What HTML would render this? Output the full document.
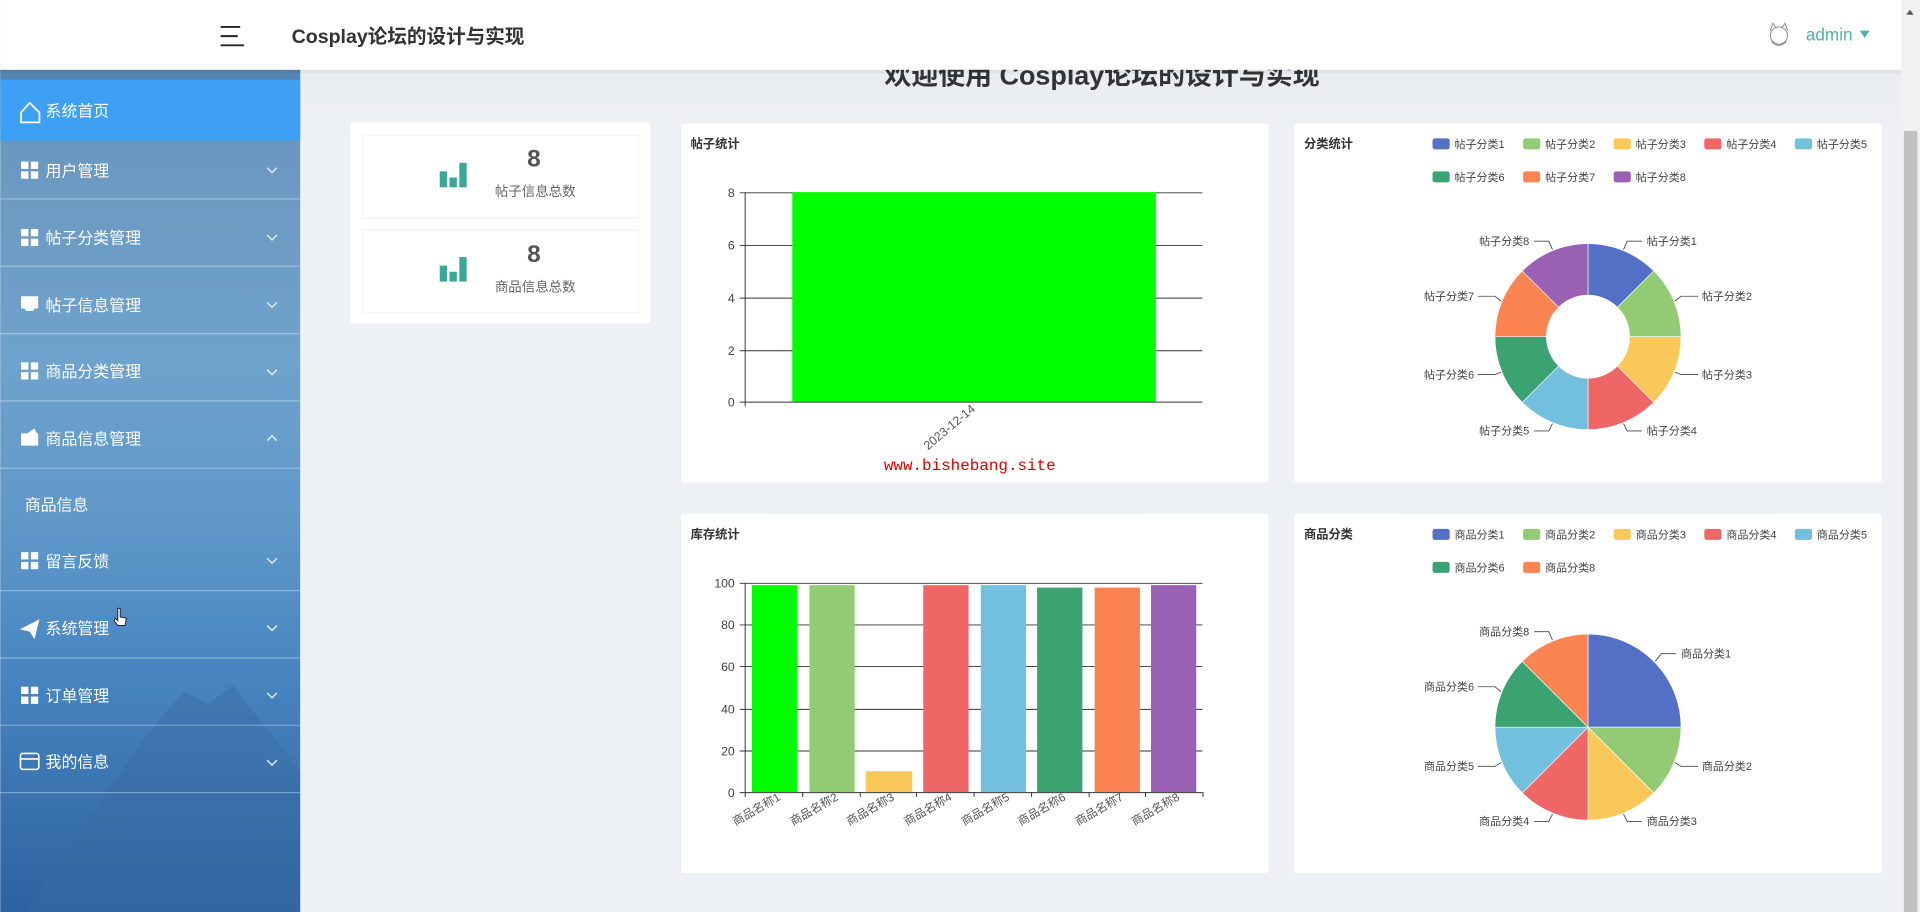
<!DOCTYPE html>
<html><head><meta charset="utf-8"><style>
html,body{margin:0;padding:0;width:1920px;height:912px;overflow:hidden;background:#edf0f4}
svg{display:block}
text{font-family:"Liberation Sans","Noto Sans CJK SC",sans-serif}
text.mono{font-family:"Liberation Mono",monospace}
</style></head><body>
<svg width="1920" height="912" viewBox="0 0 1568 745" xmlns="http://www.w3.org/2000/svg">
<defs>
<linearGradient id="sb" x1="0" y1="0" x2="0" y2="1">
<stop offset="0" stop-color="#5f8fb8"/>
<stop offset="0.1" stop-color="#6b98c0"/>
<stop offset="0.35" stop-color="#6fa2cc"/>
<stop offset="0.55" stop-color="#5e97c8"/>
<stop offset="0.7" stop-color="#4a87c2"/>
<stop offset="1" stop-color="#2d62a0"/>
</linearGradient>
<linearGradient id="bg" x1="0" y1="0" x2="0" y2="1">
<stop offset="0" stop-color="#e6e9ee"/><stop offset="0.15" stop-color="#edf0f4"/><stop offset="1" stop-color="#edf0f4"/>
</linearGradient>
</defs>
<rect x="245" y="0" width="1308" height="745" fill="url(#bg)"/>
<text x="900" y="69" text-anchor="middle" font-size="22" font-weight="bold" fill="#333">欢迎使用 Cosplay论坛的设计与实现</text>

<!-- sidebar -->
<rect x="0" y="57" width="245" height="688" fill="url(#sb)"/>
<polygon points="20,745 120,600 150,565 170,575 190,560 245,630 245,745" fill="#3a6ba5" opacity="0.45"/>
<rect x="0" y="57" width="245" height="8" fill="#5585b0"/>
<rect x="0" y="65" width="245" height="50" fill="#3ea0f2"/>
<g stroke="rgba(255,255,255,0.35)" stroke-width="1">
<line x1="0" y1="162.5" x2="245" y2="162.5"/><line x1="0" y1="217.5" x2="245" y2="217.5"/>
<line x1="0" y1="272.5" x2="245" y2="272.5"/><line x1="0" y1="327.5" x2="245" y2="327.5"/>
<line x1="0" y1="382.5" x2="245" y2="382.5"/><line x1="0" y1="482.5" x2="245" y2="482.5"/>
<line x1="0" y1="537.5" x2="245" y2="537.5"/><line x1="0" y1="592.5" x2="245" y2="592.5"/>
<line x1="0" y1="647.5" x2="245" y2="647.5"/>
</g>
<g fill="#fff" font-size="13">
<path d="M17,92 L24,84 L32,92 L32,100 L17,100 Z" fill="none" stroke="#fff" stroke-width="1.4"/>
<text x="37" y="95">系统首页</text>
<g><rect x="17" y="132" width="6" height="6"/><rect x="25" y="132" width="6" height="6"/><rect x="17" y="140" width="6" height="6"/><rect x="25" y="140" width="6" height="6"/></g>
<text x="37" y="144">用户管理</text>
<g><rect x="17" y="187" width="6" height="6"/><rect x="25" y="187" width="6" height="6"/><rect x="17" y="195" width="6" height="6"/><rect x="25" y="195" width="6" height="6"/></g>
<text x="37" y="199">帖子分类管理</text>
<path d="M17,242 h14 v10 h-3 l-1,2 h-6 l-1,-2 h-3z"/>
<text x="37" y="254">帖子信息管理</text>
<g><rect x="17" y="296" width="6" height="6"/><rect x="25" y="296" width="6" height="6"/><rect x="17" y="304" width="6" height="6"/><rect x="25" y="304" width="6" height="6"/></g>
<text x="37" y="308">商品分类管理</text>
<path d="M17,354 h14 v10 h-14z M22,354 l6,-4 l2,4z"/>
<text x="37" y="363">商品信息管理</text>
<text x="20" y="417">商品信息</text>
<g><rect x="17" y="451" width="6" height="6"/><rect x="25" y="451" width="6" height="6"/><rect x="17" y="459" width="6" height="6"/><rect x="25" y="459" width="6" height="6"/></g>
<text x="37" y="463">留言反馈</text>
<path d="M16,514 L32,506 L28,522 L24,516 Z M24,516 L25,522 Z" />
<text x="37" y="518">系统管理</text>
<g><rect x="17" y="561" width="6" height="6"/><rect x="25" y="561" width="6" height="6"/><rect x="17" y="569" width="6" height="6"/><rect x="25" y="569" width="6" height="6"/></g>
<text x="37" y="573">订单管理</text>
<rect x="16.5" y="615.5" width="15" height="13" rx="2" fill="none" stroke="#fff" stroke-width="1.3"/><line x1="17" y1="620" x2="31" y2="620" stroke="#fff" stroke-width="1.3"/>
<text x="37" y="627">我的信息</text>
</g>
<g fill="none" stroke="#dfeaf5" stroke-width="1.2">
<path d="M218,137 l4,4 l4,-4"/><path d="M218,192 l4,4 l4,-4"/><path d="M218,247 l4,4 l4,-4"/>
<path d="M218,302 l4,4 l4,-4"/><path d="M218,360 l4,-4 l4,4"/><path d="M218,456 l4,4 l4,-4"/>
<path d="M218,511 l4,4 l4,-4"/><path d="M218,566 l4,4 l4,-4"/><path d="M218,621 l4,4 l4,-4"/>
</g>
<path d="M96,497 v10 l-2,-2 l-1,2 l3,4 h6 l1,-6 l-5,-1 v-7z" fill="#fff" stroke="#222" stroke-width="0.8"/>

<!-- header -->
<rect x="0" y="0" width="1553" height="57" fill="#fff"/>
<rect x="0" y="57" width="1553" height="3" fill="#000" opacity="0.04"/>
<g stroke="#222" stroke-width="1.6"><line x1="180" y1="22" x2="196" y2="22"/><line x1="180" y1="29.5" x2="194" y2="29.5"/><line x1="180" y1="37" x2="199" y2="37"/></g>
<text x="238" y="35" font-size="16" font-weight="bold" fill="#333">Cosplay论坛的设计与实现</text>
<g fill="none" stroke="#888" stroke-width="0.8"><circle cx="1453" cy="29" r="7"/><path d="M1446,25 l2,-6 l3,4 M1460,25 l-2,-6 l-3,4 M1447,34 q6,6 12,0"/></g>
<text x="1475" y="33" font-size="14" fill="#4db3a6">admin</text>
<path d="M1519,25 h8 l-4,6z" fill="#4db3a6"/>

<!-- scrollbar -->
<rect x="1553" y="0" width="15" height="745" fill="#f1f1f1"/>
<rect x="1555" y="107" width="11" height="638" fill="#c1c1c1"/>
<path d="M1557,12 h6 l-3,-4z" fill="#555"/>

<!-- stat box -->
<rect x="286" y="100" width="245" height="164" fill="#fff" rx="2"/>
<rect x="296.5" y="110.5" width="225" height="68" fill="#fff" stroke="#f4f4f4"/>
<rect x="296.5" y="187.5" width="225" height="68" fill="#fff" stroke="#f4f4f4"/>
<g fill="#3aa894"><rect x="359" y="140" width="6" height="13"/><rect x="367" y="145" width="6" height="8"/><rect x="375" y="133" width="6" height="20"/>
<rect x="359" y="217" width="6" height="13"/><rect x="367" y="222" width="6" height="8"/><rect x="375" y="210" width="6" height="20"/></g>
<text x="436" y="136" text-anchor="middle" font-size="20" font-weight="bold" fill="#555">8</text>
<text x="437" y="160" text-anchor="middle" font-size="11" fill="#666">帖子信息总数</text>
<text x="436" y="214" text-anchor="middle" font-size="20" font-weight="bold" fill="#555">8</text>
<text x="437" y="238" text-anchor="middle" font-size="11" fill="#666">商品信息总数</text>

<!-- cards -->
<rect x="556" y="101" width="480" height="293" fill="#fff" rx="2"/>
<rect x="1057" y="101" width="480" height="293" fill="#fff" rx="2"/>
<rect x="556" y="420" width="480" height="293" fill="#fff" rx="2"/>
<rect x="1057" y="420" width="480" height="293" fill="#fff" rx="2"/>

<!-- chart 1 -->
<text x="564" y="121" font-size="10" font-weight="bold" fill="#333">帖子统计</text>
<g stroke="#333" stroke-width="0.8">
<line x1="604" y1="157.5" x2="982" y2="157.5"/><line x1="604" y1="200.5" x2="982" y2="200.5"/>
<line x1="604" y1="243.5" x2="982" y2="243.5"/><line x1="604" y1="286.5" x2="982" y2="286.5"/>
<line x1="604" y1="328.5" x2="982" y2="328.5"/><line x1="608.5" y1="157" x2="608.5" y2="332"/>
</g>
<rect x="647" y="157" width="297" height="171" fill="#00ff00"/>
<g font-size="10" fill="#444" text-anchor="end">
<text x="600" y="161">8</text><text x="600" y="204">6</text><text x="600" y="247">4</text><text x="600" y="290">2</text><text x="600" y="332">0</text>
</g>
<text x="797" y="335" font-size="10" fill="#555" text-anchor="end" transform="rotate(-40 797 335)">2023-12-14</text>
<text class="mono" x="792" y="384" font-size="13" fill="#d00" text-anchor="middle">www.bishebang.site</text>

<!-- chart 3 -->
<text x="564" y="440" font-size="10" font-weight="bold" fill="#333">库存统计</text>
<g stroke="#333" stroke-width="0.8">
<line x1="604" y1="476.5" x2="982" y2="476.5"/><line x1="604" y1="510.5" x2="982" y2="510.5"/>
<line x1="604" y1="544.5" x2="982" y2="544.5"/><line x1="604" y1="579.5" x2="982" y2="579.5"/>
<line x1="604" y1="613.5" x2="982" y2="613.5"/><line x1="604" y1="647.5" x2="982" y2="647.5"/>
<line x1="608.5" y1="476" x2="608.5" y2="651"/>
<line x1="655.5" y1="647" x2="655.5" y2="651"/><line x1="702.5" y1="647" x2="702.5" y2="651"/>
<line x1="748.5" y1="647" x2="748.5" y2="651"/><line x1="795.5" y1="647" x2="795.5" y2="651"/>
<line x1="842.5" y1="647" x2="842.5" y2="651"/><line x1="889.5" y1="647" x2="889.5" y2="651"/>
<line x1="935.5" y1="647" x2="935.5" y2="651"/><line x1="982.5" y1="647" x2="982.5" y2="651"/>
</g>
<rect x="614" y="478" width="37" height="169" fill="#00ff00"/>
<rect x="661" y="478" width="37" height="169" fill="#91cc75"/>
<rect x="707" y="630" width="38" height="17" fill="#fac858"/>
<rect x="754" y="478" width="37" height="169" fill="#ee6666"/>
<rect x="801" y="478" width="37" height="169" fill="#73c0de"/>
<rect x="847" y="480" width="37" height="167" fill="#3ba272"/>
<rect x="894" y="480" width="37" height="167" fill="#fc8452"/>
<rect x="940" y="478" width="37" height="169" fill="#9a60b4"/>
<g font-size="10" fill="#444" text-anchor="end">
<text x="600" y="480">100</text><text x="600" y="514">80</text><text x="600" y="548">60</text><text x="600" y="583">40</text><text x="600" y="617">20</text><text x="600" y="651">0</text>
</g>
<g font-size="9.5" fill="#555" text-anchor="end">
<text transform="translate(638,653) rotate(-30)">商品名称1</text>
<text transform="translate(685,653) rotate(-30)">商品名称2</text>
<text transform="translate(731,653) rotate(-30)">商品名称3</text>
<text transform="translate(778,653) rotate(-30)">商品名称4</text>
<text transform="translate(825,653) rotate(-30)">商品名称5</text>
<text transform="translate(871,653) rotate(-30)">商品名称6</text>
<text transform="translate(918,653) rotate(-30)">商品名称7</text>
<text transform="translate(964,653) rotate(-30)">商品名称8</text>
</g>

<!-- chart 2 -->
<text x="1065" y="121" font-size="10" font-weight="bold" fill="#333">分类统计</text>
<g font-size="9" fill="#444">
<rect x="1170" y="113" width="14" height="9" rx="2" fill="#5470c6"/><text x="1188" y="121">帖子分类1</text>
<rect x="1244" y="113" width="14" height="9" rx="2" fill="#91cc75"/><text x="1262" y="121">帖子分类2</text>
<rect x="1318" y="113" width="14" height="9" rx="2" fill="#fac858"/><text x="1336" y="121">帖子分类3</text>
<rect x="1392" y="113" width="14" height="9" rx="2" fill="#ee6666"/><text x="1410" y="121">帖子分类4</text>
<rect x="1466" y="113" width="14" height="9" rx="2" fill="#73c0de"/><text x="1484" y="121">帖子分类5</text>
<rect x="1170" y="140" width="14" height="9" rx="2" fill="#3ba272"/><text x="1188" y="148">帖子分类6</text>
<rect x="1244" y="140" width="14" height="9" rx="2" fill="#fc8452"/><text x="1262" y="148">帖子分类7</text>
<rect x="1318" y="140" width="14" height="9" rx="2" fill="#9a60b4"/><text x="1336" y="148">帖子分类8</text>
</g>
<g stroke="#fff" stroke-width="0.5">
<path d="M1297,199 A76,76 0 0 1 1350.7,221.3 L1321,251 A34,34 0 0 0 1297,241Z" fill="#5470c6"/>
<path d="M1350.7,221.3 A76,76 0 0 1 1373,275 L1331,275 A34,34 0 0 0 1321,251Z" fill="#91cc75"/>
<path d="M1373,275 A76,76 0 0 1 1350.7,328.7 L1321,299 A34,34 0 0 0 1331,275Z" fill="#fac858"/>
<path d="M1350.7,328.7 A76,76 0 0 1 1297,351 L1297,309 A34,34 0 0 0 1321,299Z" fill="#ee6666"/>
<path d="M1297,351 A76,76 0 0 1 1243.3,328.7 L1273,299 A34,34 0 0 0 1297,309Z" fill="#73c0de"/>
<path d="M1243.3,328.7 A76,76 0 0 1 1221,275 L1263,275 A34,34 0 0 0 1273,299Z" fill="#3ba272"/>
<path d="M1221,275 A76,76 0 0 1 1243.3,221.3 L1273,251 A34,34 0 0 0 1263,275Z" fill="#fc8452"/>
<path d="M1243.3,221.3 A76,76 0 0 1 1297,199 L1297,241 A34,34 0 0 0 1273,251Z" fill="#9a60b4"/>
</g>
<g fill="none" stroke="#444" stroke-width="0.7">
<path d="M1326,204 l3,-7 h12"/><path d="M1368,246 l5,-4 h14"/><path d="M1368,304 l5,2 h14"/><path d="M1326,346 l3,6 h12"/>
<path d="M1268,346 l-3,6 h-12"/><path d="M1226,304 l-5,2 h-14"/><path d="M1226,246 l-5,-4 h-14"/><path d="M1268,204 l-3,-7 h-12"/>
</g>
<g font-size="9" fill="#444">
<text x="1345" y="200">帖子分类1</text><text x="1390" y="245">帖子分类2</text><text x="1390" y="309">帖子分类3</text><text x="1345" y="355">帖子分类4</text>
<g text-anchor="end"><text x="1249" y="355">帖子分类5</text><text x="1204" y="309">帖子分类6</text><text x="1204" y="245">帖子分类7</text><text x="1249" y="200">帖子分类8</text></g>
</g>

<!-- chart 4 -->
<text x="1065" y="440" font-size="10" font-weight="bold" fill="#333">商品分类</text>
<g font-size="9" fill="#444">
<rect x="1170" y="432" width="14" height="9" rx="2" fill="#5470c6"/><text x="1188" y="440">商品分类1</text>
<rect x="1244" y="432" width="14" height="9" rx="2" fill="#91cc75"/><text x="1262" y="440">商品分类2</text>
<rect x="1318" y="432" width="14" height="9" rx="2" fill="#fac858"/><text x="1336" y="440">商品分类3</text>
<rect x="1392" y="432" width="14" height="9" rx="2" fill="#ee6666"/><text x="1410" y="440">商品分类4</text>
<rect x="1466" y="432" width="14" height="9" rx="2" fill="#73c0de"/><text x="1484" y="440">商品分类5</text>
<rect x="1170" y="459" width="14" height="9" rx="2" fill="#3ba272"/><text x="1188" y="467">商品分类6</text>
<rect x="1244" y="459" width="14" height="9" rx="2" fill="#fc8452"/><text x="1262" y="467">商品分类8</text>
</g>
<g stroke="#fff" stroke-width="0.5">
<path d="M1297,594 L1297,518 A76,76 0 0 1 1373,594Z" fill="#5470c6"/>
<path d="M1297,594 L1373,594 A76,76 0 0 1 1350.7,647.7Z" fill="#91cc75"/>
<path d="M1297,594 L1350.7,647.7 A76,76 0 0 1 1297,670Z" fill="#fac858"/>
<path d="M1297,594 L1297,670 A76,76 0 0 1 1243.3,647.7Z" fill="#ee6666"/>
<path d="M1297,594 L1243.3,647.7 A76,76 0 0 1 1221,594Z" fill="#73c0de"/>
<path d="M1297,594 L1221,594 A76,76 0 0 1 1243.3,540.3Z" fill="#3ba272"/>
<path d="M1297,594 L1243.3,540.3 A76,76 0 0 1 1297,518Z" fill="#fc8452"/>
</g>
<g fill="none" stroke="#444" stroke-width="0.7">
<path d="M1352,540 l5,-6 h12"/><path d="M1368,623 l5,3 h14"/><path d="M1326,665 l3,6 h12"/><path d="M1268,665 l-3,6 h-12"/>
<path d="M1226,623 l-5,3 h-14"/><path d="M1226,565 l-5,-4 h-14"/><path d="M1268,523 l-3,-7 h-12"/>
</g>
<g font-size="9" fill="#444">
<text x="1373" y="537">商品分类1</text><text x="1390" y="629">商品分类2</text><text x="1345" y="674">商品分类3</text>
<g text-anchor="end"><text x="1249" y="674">商品分类4</text><text x="1204" y="629">商品分类5</text><text x="1204" y="564">商品分类6</text><text x="1249" y="519">商品分类8</text></g>
</g>
</svg>
</body></html>
